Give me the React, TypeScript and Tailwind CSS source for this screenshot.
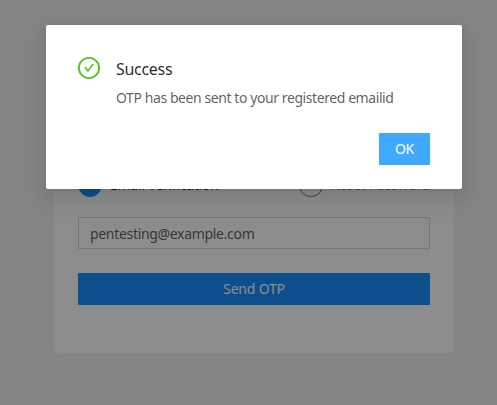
import React from "react";

function Step({ label, active }: { label: string; active?: boolean }) {
  return (
    <div className="flex items-center">
      <span
        className={
          "flex h-6 w-6 items-center justify-center rounded-full border text-xs " +
          (active ? "border-[#1890ff] bg-[#1890ff] text-white" : "border-black/45 bg-white text-black/25")
        }
      >
        {active ? "1" : "2"}
      </span>
      <span
        className={
          "ml-2 text-sm leading-[26px] " +
          (active ? "tracking-[-0.3px] text-black/85" : "tracking-[-0.28px] text-black/45")
        }
      >
        {label}
      </span>
    </div>
  );
}

export default function App() {
  return (
    <div className="relative flex h-[405px] w-[497px] flex-col overflow-hidden bg-[#f0f2f5] font-['Noto_Sans',sans-serif] text-sm text-black/65">
      <main className="mt-12 ml-[54px] flex h-[305px] w-[400px] flex-col rounded-[5px] bg-white px-6 pt-[124px]">
        <div className="flex justify-between">
          <Step label="Email Verification" active />
          <Step label="Reset Password" />
        </div>
        <input
          type="text"
          defaultValue="pentesting@example.com"
          className="mt-[19px] h-8 w-full shrink-0 border border-[#d9d9d9] bg-white px-[11px] text-sm tracking-[-0.32px] text-black/65 outline-none"
        />
        <button className="mt-6 h-8 w-full shrink-0 rounded-[1px] bg-[#1890ff] tracking-[-0.2px] text-white">
          Send OTP
        </button>
      </main>

      <div className="absolute inset-0 bg-black/45 px-[46px] pt-[25px]">
        <section
          role="dialog"
          className="flex h-[164px] w-[416px] flex-col rounded-xs bg-white px-8 pt-8 shadow-[0_3px_6px_-4px_rgba(0,0,0,0.12),0_6px_16px_0_rgba(0,0,0,0.08),0_9px_28px_8px_rgba(0,0,0,0.05)]"
        >
          <div className="flex">
            <svg viewBox="64 64 896 896" className="h-[22px] w-[22px] shrink-0 fill-[#52c41a]">
              <path d="M699 353h-46.9c-10.2 0-19.9 4.9-25.9 13.3L469 584.3l-71.2-98.8c-6-8.3-15.6-13.3-25.9-13.3H325c-6.5 0-10.3 7.4-6.5 12.7l124.6 172.8a31.8 31.8 0 0 0 51.7 0l210.6-292c3.9-5.3.1-12.7-6.4-12.7z" />
              <path d="M512 64C264.6 64 64 264.6 64 512s200.6 448 448 448 448-200.6 448-448S759.4 64 512 64zm0 820c-205.4 0-372-166.6-372-372s166.6-372 372-372 372 166.6 372 372-166.6 372-372 372z" />
            </svg>
            <div className="ml-4">
              <h1 className="pt-px text-base leading-[22px] tracking-[-0.3px] text-black/85">Success</h1>
              <p className="mt-[7px] leading-[21px] tracking-[-0.42px] text-black/65">
                OTP has been sent to your registered emailid
              </p>
            </div>
          </div>
          <div className="mt-[25px] flex justify-end">
            <button className="h-8 w-[51px] rounded-[1px] bg-[#40a9ff] tracking-[-0.2px] text-white">OK</button>
          </div>
        </section>
      </div>
    </div>
  );
}
